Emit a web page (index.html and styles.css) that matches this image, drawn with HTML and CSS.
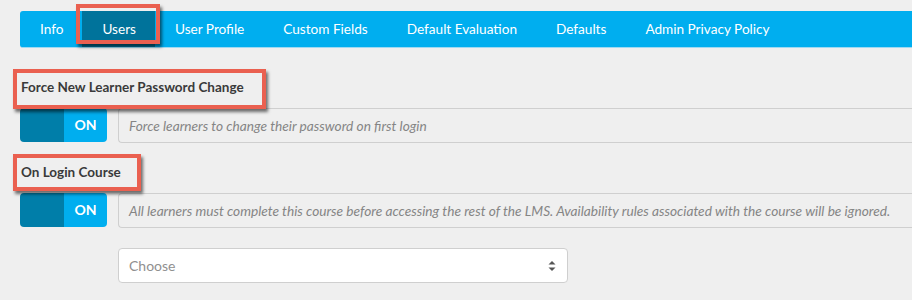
FILE: index.html
```html
<!DOCTYPE html>
<html lang="en">
<head>
    <meta charset="UTF-8">
    <title>Users Settings</title>
    <link rel="stylesheet" href="styles.css">
</head>
<body>
    <!-- Settings tabs -->
    <nav class="tabs">
        <a class="tab">Info</a>
        <a class="tab active marked">Users</a>
        <a class="tab">User Profile</a>
        <a class="tab">Custom Fields</a>
        <a class="tab">Default Evaluation</a>
        <a class="tab">Defaults</a>
        <a class="tab">Admin Privacy Policy</a>
    </nav>

    <!-- Force password change -->
    <div class="field first">
        <label class="field-label marked">Force New Learner Password Change</label>
        <div class="field-row">
            <div class="toggle"><span class="toggle-off"></span><span class="toggle-on">ON</span></div>
            <div class="field-help">Force learners to change their password on first login</div>
        </div>
    </div>

    <!-- On login course -->
    <div class="field">
        <label class="field-label marked short">On Login Course</label>
        <div class="field-row">
            <div class="toggle"><span class="toggle-off"></span><span class="toggle-on">ON</span></div>
            <div class="field-help">All learners must complete this course before accessing the rest of the LMS. Availability rules associated with the course will be ignored.</div>
        </div>
        <div class="select-box">
            <span>Choose</span>
            <svg class="select-arrows" width="8" height="12" viewBox="0 0 8 12">
                <path d="M4 1 L7.5 4.5 L0.5 4.5 Z" fill="#555"/>
                <path d="M4 11 L7.5 7.5 L0.5 7.5 Z" fill="#555"/>
            </svg>
        </div>
    </div>
</body>
</html>
```

FILE: styles.css
```css
body {
    margin: 0;
    padding: 11px 0 0 20px;
    background-color: #efefef;
    font-family: 'Lato', 'Open Sans', sans-serif;
    font-size: 14px;
    color: #3d3d3d;
    overflow: hidden;
}

/* Tabs */
.tabs {
    display: flex;
    height: 36px;
    background-color: #00aeef;
    border-bottom: 1px solid #9fd9f2;
    border-radius: 3px 0 0 3px;
}

.tab {
    padding: 0 19px 0 20px;
    line-height: 36px;
    font-size: 13.6px;
    color: white;
    cursor: pointer;
}

.tab.active {
    background-color: #00739b;
}

/* Red annotation frames */
.marked {
    position: relative;
}

.marked::after {
    content: '';
    position: absolute;
    top: -9px;
    right: -22px;
    bottom: -13px;
    left: -8px;
    border: 4px solid #ea6050;
    box-shadow: 2px 3px 3px rgba(0, 0, 0, 0.55);
    pointer-events: none;
}

.tab.marked::after {
    top: -7px;
    right: -5px;
    bottom: 3px;
    left: -6px;
}

.field-label.short::after {
    right: -20px;
    bottom: -10px;
}

/* Fields */
.field {
    margin-top: 20px;
}

.field.first {
    margin-top: 30px;
}

.field-label {
    display: inline-block;
    height: 18px;
    line-height: 18px;
    margin-left: 1px;
    font-weight: bold;
    font-size: 13.5px;
    color: #3a3a3a;
}

.field-row {
    display: flex;
    margin-top: 12px;
    height: 35px;
}

.toggle {
    display: flex;
    width: 87px;
    height: 34px;
    border-radius: 4px;
    overflow: hidden;
    flex-shrink: 0;
}

.toggle-off {
    width: 44px;
    background-color: #007ea9;
}

.toggle-on {
    flex: 1;
    background-color: #00aeef;
    color: white;
    font-weight: bold;
    text-align: center;
    line-height: 34px;
}

.field-help {
    flex: 1;
    margin-left: 11px;
    padding-left: 10px;
    border: 1px solid #cfcfcf;
    border-right: none;
    border-radius: 4px 0 0 4px;
    line-height: 33px;
    font-size: 13.7px;
    font-style: italic;
    color: #858585;
    white-space: nowrap;
}

.select-box {
    display: flex;
    align-items: center;
    justify-content: space-between;
    width: 427px;
    height: 33px;
    margin: 20px 0 0 98px;
    padding: 0 11px 0 10px;
    background-color: white;
    border: 1px solid #cfcfcf;
    border-radius: 4px;
    color: #909090;
}
```
